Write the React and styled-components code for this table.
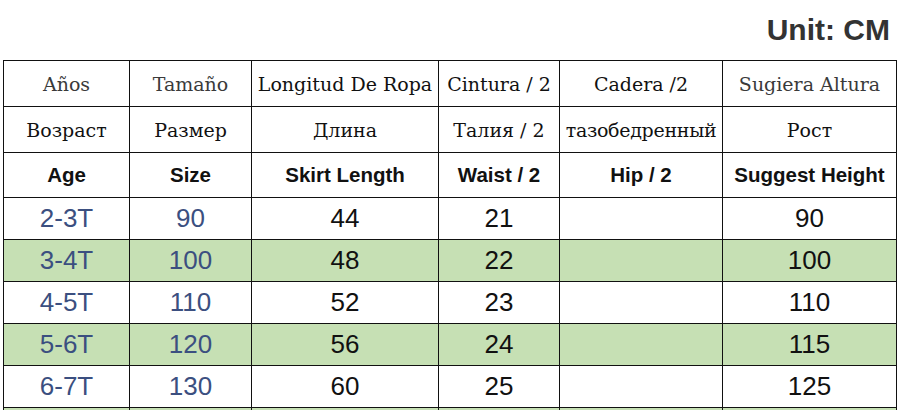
import React from 'react';
import styled, { createGlobalStyle } from 'styled-components';

const GlobalStyle = createGlobalStyle`
  html, body {
    margin: 0;
    padding: 0;
    background: #ffffff;
  }
  body {
    font-family: "Liberation Sans", Arial, sans-serif;
  }
`

const Page = styled.div`
  width: 900px;
  height: 410px;
  overflow: hidden;
  background: #ffffff;
`

const UnitBar = styled.div`
  height: 60px;
  display: flex;
  align-items: center;
  justify-content: flex-end;
  padding: 0 10px 0 0;
  box-sizing: border-box;
`

const Unit = styled.div`
  font-family: "Liberation Sans", Arial, sans-serif;
  font-weight: 700;
  font-size: 30px;
  color: #333333;
`

const Table = styled.table`
  margin-left: 3px;
  width: 893px;
  border-collapse: collapse;
  table-layout: fixed;
`

const Row = styled.tr`
  height: ${props => props.h}px;
  background: ${props => props.green ? '#c6e0b4' : '#ffffff'};
`

const Cell = styled.td`
  border: 1.6px solid #111111;
  padding: 0;
  text-align: center;
  vertical-align: middle;
  white-space: nowrap;
  overflow: hidden;
`

const SerifCell = styled(Cell)`
  font-family: "DejaVu Serif", "Liberation Serif", serif;
  font-size: 19px;
  letter-spacing: ${props => props.tight ? '-0.3px' : '0px'};
  color: ${props => props.muted ? '#3a3a3a' : '#111111'};
`

const BoldCell = styled(Cell)`
  font-family: "Liberation Sans", Arial, sans-serif;
  font-weight: 700;
  font-size: 20.5px;
  color: #111111;
`

const DataCell = styled(Cell)`
  font-family: "Liberation Sans", Arial, sans-serif;
  font-size: 26px;
  color: ${props => props.blue ? '#3b4f80' : '#111111'};
`

const widths = [126, 122, 187, 121, 163, 174];

const spanish = [
  { t: 'Años', muted: true },
  { t: 'Tamaño', muted: true },
  { t: 'Longitud De Ropa' },
  { t: 'Cintura / 2' },
  { t: 'Cadera /2' },
  { t: 'Sugiera Altura', muted: true },
];

const russian = ['Возраст', 'Размер', 'Длина', 'Талия / 2', 'тазобедренный', 'Рост'];

const english = ['Age', 'Size', 'Skirt Length', 'Waist / 2', 'Hip / 2', 'Suggest Height'];

const sizes = [
  ['2-3T', '90', '44', '21', '', '90'],
  ['3-4T', '100', '48', '22', '', '100'],
  ['4-5T', '110', '52', '23', '', '110'],
  ['5-6T', '120', '56', '24', '', '115'],
  ['6-7T', '130', '60', '25', '', '125'],
];

export default function App() {
  return (
    <Page>
      <GlobalStyle />
      <UnitBar>
        <Unit>Unit: CM</Unit>
      </UnitBar>
      <Table>
        <colgroup>
          {widths.map((w, i) => <col key={i} style={{ width: w }} />)}
        </colgroup>
        <tbody>
          <Row h={46}>
            {spanish.map((c, i) => (
              <SerifCell key={i} muted={c.muted}>{c.t}</SerifCell>
            ))}
          </Row>
          <Row h={46}>
            {russian.map((t, i) => (
              <SerifCell key={i} tight={i === 4}>{t}</SerifCell>
            ))}
          </Row>
          <Row h={45}>
            {english.map((t, i) => <BoldCell key={i}>{t}</BoldCell>)}
          </Row>
          {sizes.map((r, ri) => (
            <Row key={ri} h={42} green={ri % 2 === 1}>
              {r.map((v, ci) => (
                <DataCell key={ci} blue={ci < 2}>{v}</DataCell>
              ))}
            </Row>
          ))}
          {/* next row continues below the visible area */}
          <Row h={42} green>
            {widths.map((w, i) => <DataCell key={i} />)}
          </Row>
        </tbody>
      </Table>
    </Page>
  );
}
